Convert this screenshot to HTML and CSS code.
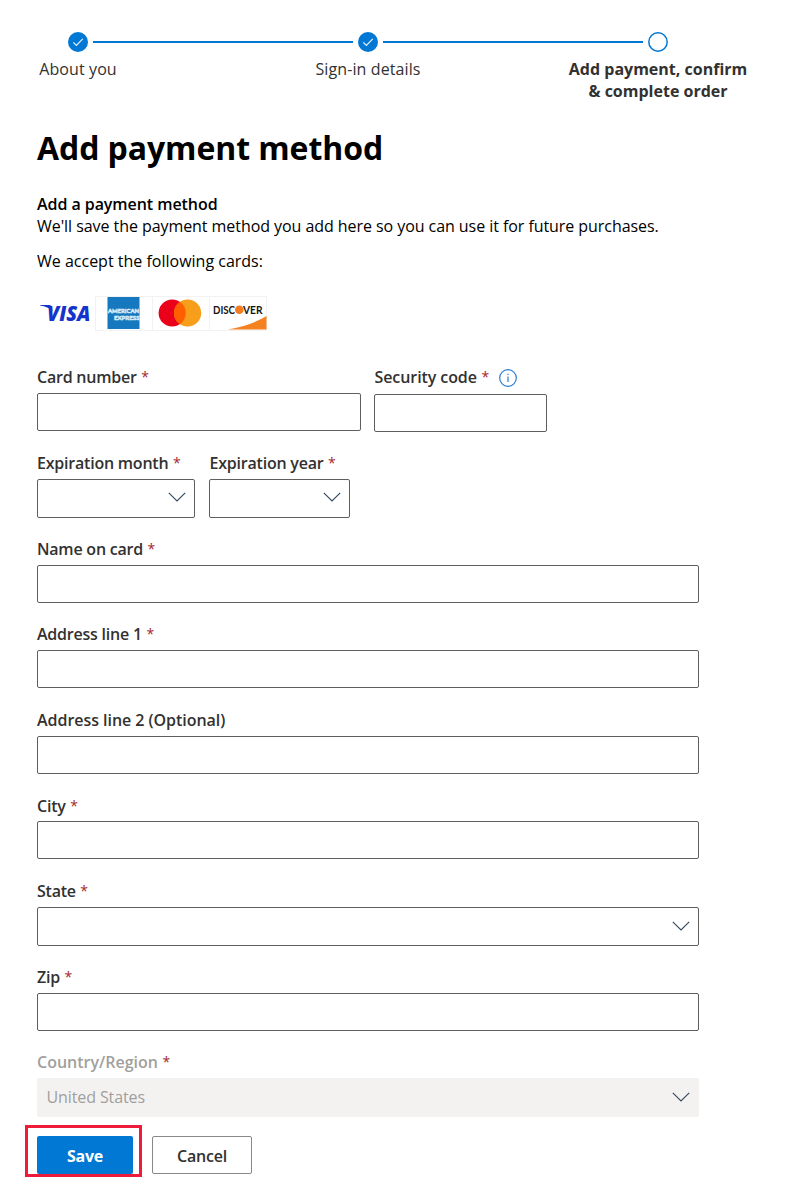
FILE: index.html
```html
<!DOCTYPE html>
<html lang="en">
<head>
<meta charset="utf-8">
<title>Add payment method</title>
<link rel="stylesheet" href="styles.css">
</head>
<body>
<svg class="defs" aria-hidden="true">
  <symbol id="done" viewBox="0 0 20 20"><circle cx="10" cy="10" r="10" fill="#0078d4"/><path d="M5.3 10.3l3.1 3.2 6.4-6.7" fill="none" stroke="#e4f1fc" stroke-width="1.2"/></symbol>
  <symbol id="chevron" viewBox="0 0 18 10"><path d="M.8.8L9 9 17.200.8" fill="none" stroke="#34485f" stroke-width="1.15"/></symbol>
</svg>
<nav class="steps">
  <svg class="dot"><use href="#done"/></svg>
  <span class="line"></span>
  <svg class="dot"><use href="#done"/></svg>
  <span class="line"></span>
  <svg class="dot" viewBox="0 0 20 20"><circle cx="10" cy="10" r="9.200" fill="#fff" stroke="#0078d4" stroke-width="1.500"/></svg>
</nav>
<div class="step-names">
  <span class="name">About you</span>
  <span class="name">Sign-in details</span>
  <span class="name current">Add payment, confirm<br>&amp; complete order</span>
</div>
<main class="content">
  <h1 class="title">Add payment method</h1>
  <h2 class="subtitle">Add a payment method</h2>
  <p class="text save-note">We'll save the payment method you add here so you can use it for future purchases.</p>
  <p class="text accept">We accept the following cards:</p>
  <div class="cards">
    <svg class="visa" viewBox="0 0 58 35"><text x="10" y="24.500" textLength="43.500" lengthAdjust="spacingAndGlyphs">VISA</text><path d="M3 9h9.500q1.600 0 2.100 1.600l1 4.400Q11 11 3 9.600z" fill="#1434cb"/></svg>
    <svg class="card" viewBox="0 0 58 35"><rect x=".5" y=".5" width="57" height="34" fill="#fff" stroke="#f2f2f2"/><rect x="12.500" y="1" width="32" height="32" fill="#1678be"/><g class="amex"><text x="13" y="17" textLength="31" lengthAdjust="spacingAndGlyphs">AMERICAN</text><text x="19" y="24" textLength="25.500" lengthAdjust="spacingAndGlyphs">EXPRESS</text></g></svg>
    <svg class="card" viewBox="0 0 58 35"><rect x=".5" y=".5" width="57" height="34" fill="#fff" stroke="#f2f2f2"/><circle cx="20.200" cy="17" r="13.600" fill="#eb001b"/><circle cx="35.600" cy="17" r="13.600" fill="#f79e1b"/><path d="M27.900 5.800a13.600 13.600 0 0 1 0 22.400 13.600 13.600 0 0 1 0-22.400z" fill="#ff5f00"/></svg>
    <svg class="card" viewBox="0 0 58 35"><rect x=".5" y=".5" width="57" height="34" fill="#fff" stroke="#f2f2f2"/><path d="M19 33.500Q41 30 57.500 20V33.500z" fill="#f58220"/><g class="disc"><text x="4" y="18" textLength="22" lengthAdjust="spacingAndGlyphs">DISC</text><text x="34" y="18" textLength="19.500" lengthAdjust="spacingAndGlyphs">VER</text></g><circle cx="30.300" cy="13.800" r="4.300" fill="#f47b20"/></svg>
  </div>
  <form class="form">
    <div class="row">
      <div class="field number"><label class="label"><span>Card number</span><b class="req">*</b></label><div class="box"></div></div>
      <div class="field code"><label class="label"><span>Security code</span><b class="req">*</b><svg class="info" viewBox="0 0 18 18"><circle cx="9" cy="9" r="8.300"/><path d="M9 7.500v5.500M9 4.800v1.300"/></svg></label><div class="box"></div></div>
    </div>
    <div class="row">
      <div class="field month"><label class="label"><span>Expiration month</span><b class="req">*</b></label><div class="box select"><svg class="chev"><use href="#chevron"/></svg></div></div>
      <div class="field year"><label class="label"><span>Expiration year</span><b class="req">*</b></label><div class="box select"><svg class="chev"><use href="#chevron"/></svg></div></div>
    </div>
    <div class="field"><label class="label"><span>Name on card</span><b class="req">*</b></label><div class="box"></div></div>
    <div class="field"><label class="label"><span>Address line 1</span><b class="req">*</b></label><div class="box"></div></div>
    <div class="field"><label class="label optional"><span>Address line 2 (Optional)</span></label><div class="box"></div></div>
    <div class="field"><label class="label"><span>City</span><b class="req">*</b></label><div class="box"></div></div>
    <div class="field"><label class="label"><span>State</span><b class="req">*</b></label><div class="box select"><svg class="chev"><use href="#chevron"/></svg></div></div>
    <div class="field"><label class="label"><span>Zip</span><b class="req">*</b></label><div class="box"></div></div>
    <div class="field disabled"><label class="label"><span>Country/Region</span><b class="req">*</b></label><div class="box select"><span class="value">United States</span><svg class="chev"><use href="#chevron"/></svg></div></div>
  </form>
  <div class="actions">
    <div class="highlight"><button class="btn save">Save</button></div>
    <button class="btn cancel">Cancel</button>
  </div>
</main>
</body>
</html>
```
FILE: styles.css
```css
* { box-sizing: border-box; }
body { margin: 0; overflow-x: hidden; background: #fff; font: 400 16px/22px "Open Sans", "Noto Sans", sans-serif; color: #323130; }
h1, h2, p { margin: 0; white-space: nowrap; }
.defs { position: absolute; width: 0; height: 0; }
.steps { display: flex; align-items: center; padding: 32px 0 0 68px; height: 52px; width: 668px; gap: 5px; }
.dot { width: 20px; height: 20px; flex: none; }
.line { width: 260px; height: 2px; background: #0078d4; flex: none; }
.step-names { display: grid; grid-template-columns: 290px 290px 290px; margin-left: -67px; padding-top: 6px; height: 66px; text-align: center; width: 870px; font-size: 16px; letter-spacing: .1px; }
.current { font-weight: 700; letter-spacing: 0; }
.content { padding-left: 37px; }
.title { font-size: 32px; letter-spacing: -.08px; line-height: 44px; font-weight: 700; color: #000; padding-top: 8px; height: 75px; }
.subtitle { font-size: 16px; letter-spacing: -.06px; line-height: 22px; font-weight: 600; color: #000; }
.text { color: #000; height: 22px; }
.save-note { letter-spacing: -.06px; }
.accept { margin-top: 13px; }
.cards { display: flex; height: 35px; margin-top: 24px; }
.visa { width: 58px; height: 35px; flex: none; }
.card { width: 58px; height: 35px; margin-right: -1px; flex: none; }
.visa text { font: italic 800 21.500px "Open Sans", sans-serif; fill: #1434cb; }
.amex { font: 700 6.200px/1 Lato, sans-serif; fill: #1678be; stroke: #d5e9f7; stroke-width: .7px; }
.disc { font: 700 11.500px Lato, sans-serif; fill: #17130f; }
.form { display: flex; flex-direction: column; gap: 20px; width: 662px; margin-top: 35.45px; }
.row { display: flex; gap: 14px; }
.field { display: flex; flex-direction: column; gap: 4.9px; height: 65.63px; }
.number { width: 324px; }
.code { width: 173px; margin-left: -1px; }
.code .label { padding-left: .5px; }
.code .box { margin-top: .8px; }
.month { width: 158px; }
.year { width: 141px; }
.year .label { padding-left: .5px; }
.label { display: flex; align-items: center; height: 22px; font-weight: 600; letter-spacing: -.22px; white-space: nowrap; }
.code .label { letter-spacing: -.08px; }
.optional { letter-spacing: -.04px; }
.req { color: #a4262c; font-size: 14px; font-weight: 400; margin: 0 0 0 4.5px; }
.info { width: 18px; height: 18px; margin: 2px 0 0 9.5px; fill: none; stroke: #2b7cd3; stroke-width: 1.2; }
.box { display: flex; align-items: center; height: 38px; flex: none; border: 1px solid #605e5c; border-radius: 2px; padding: 0 8px 0 9px; }
.select { height: 39px; }
.chev { width: 18px; height: 10px; margin: 0 0 2px auto; }
.value { letter-spacing: -.1px; margin-left: -.5px; }
.disabled .label { letter-spacing: 0; }
.disabled .label, .disabled .value { color: #a19f9d; }
.disabled .value { padding-bottom: 1px; }
.disabled .box { background: #f3f2f1; border-color: #f3f2f1; }
.actions { display: flex; gap: 10px; margin: 8.2px 0 0 -12px; height: 52px; }
.highlight { width: 117px; height: 52px; border: 3px solid #ee1c3b; padding: 8px 0 0 9px; }
.btn { height: 38px; border-radius: 2px; font: 600 16px/22px "Open Sans", sans-serif; padding: 2px 0 0; }
.save { display: block; width: 96px; background: #0078d4; color: #fff; border: 0; font-weight: 700; letter-spacing: -.3px; }
.cancel { width: 100px; margin-top: 11px; background: #fff; border: 1px solid #8a8886; color: #323130; letter-spacing: -.2px; }
```
